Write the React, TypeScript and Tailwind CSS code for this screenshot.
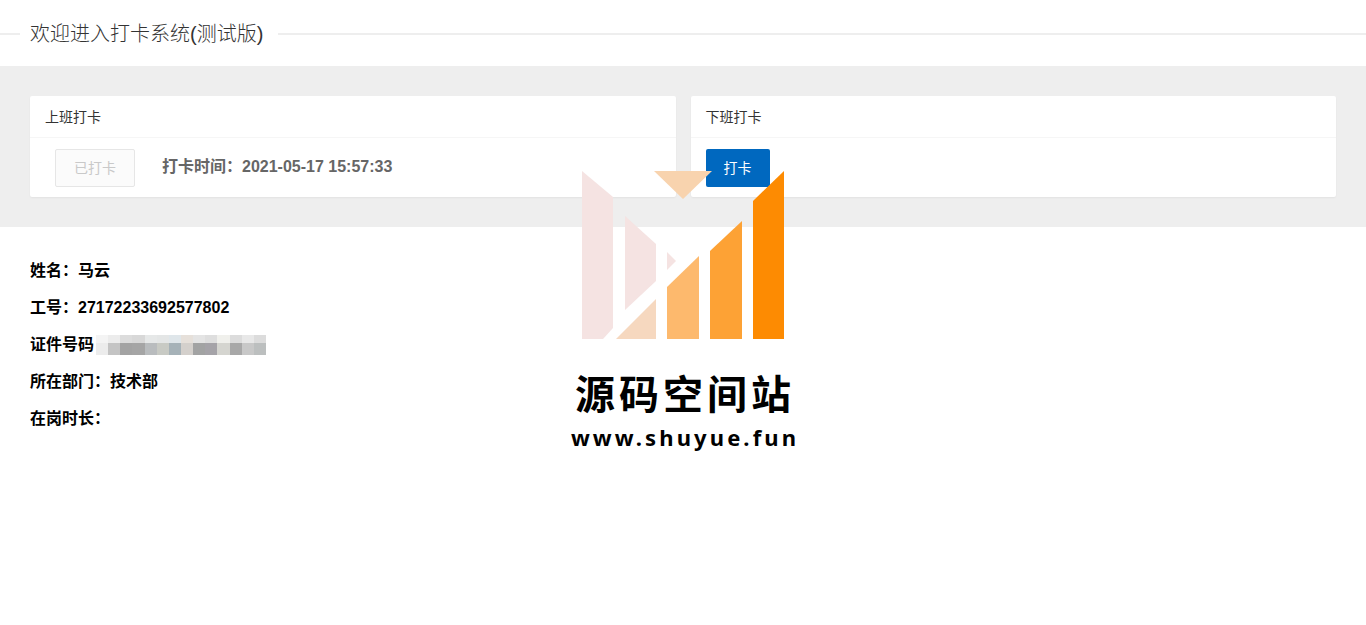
const sans = "font-['Liberation_Sans','Noto_Sans_CJK_SC',sans-serif]";

// 打码块的色块，上下两排
const mosaicTop = ['#f4f4f4', '#ececec', '#dcdcdc', '#d8d8d8', '#e6e8e8', '#e4e6e6', '#dfe6ea', '#e6e0da', '#e4e4e4', '#dedede', '#f0f0ec', '#dcdcdc', '#e8e8e8', '#dcdcdc'];
const mosaicBottom = ['#ececec', '#c4c4c4', '#a3a3a3', '#a5a5a5', '#b9bcbe', '#c8cac4', '#a6b2b8', '#d4d0cc', '#a2a3a3', '#a5a3a8', '#d5d5d0', '#a8a8a8', '#c8c8c8', '#bcbfbf'];

function Card({ title, children }: { title: string; children: React.ReactNode }) {
  return (
    <div className="flex-1 bg-white rounded-[2px] shadow-[0_1px_2px_0_rgba(0,0,0,0.05)]">
      <div className="h-[42px] px-[15px] flex items-center border-b border-[#f6f6f6] text-sm text-[#333]">{title}</div>
      <div className="h-[59px] px-[15px] pt-[11px]">{children}</div>
    </div>
  );
}

function InfoRow({ children }: { children: React.ReactNode }) {
  return <p className="h-[37px] leading-[37px] text-base font-bold text-black">{children}</p>;
}

function Watermark() {
  return (
    <div className="absolute left-[560px] top-[160px] w-[250px] flex flex-col items-center pointer-events-none">
      <svg width="250" height="190" viewBox="560 160 250 190" className="block">
        <polygon points="582,171 613,197 613,328 603,339 582,339" fill="#f5e3e2" />
        <polygon points="625,216 656,244 656,281 625,310" fill="#f5e3e2" />
        <polygon points="667,252 676,261 667,270" fill="#f5e3e2" />
        <polygon points="654,171 712,171 683,199" fill="#f8d3ae" />
        <polygon points="616,339 656,299 656,339" fill="#f6d8bf" />
        <polygon points="667,287 699,256 699,339 667,339" fill="#fdb96d" />
        <polygon points="710,251 742,221 742,339 710,339" fill="#fda235" />
        <polygon points="753,201 784,171 784,339 753,339" fill="#fd8b02" />
      </svg>
      <div className="mt-[17px] h-[50px] leading-[50px] text-[40px] font-bold tracking-[4px] text-black whitespace-nowrap font-['Noto_Sans_CJK_SC',sans-serif]">源码空间站</div>
      <div className="mt-[6px] h-[28px] leading-[28px] text-[22px] font-bold tracking-[3.1px] text-black whitespace-nowrap font-['Noto_Sans',sans-serif]">www.shuyue.fun</div>
    </div>
  );
}

export default function App() {
  return (
    <div className={`relative min-h-[625px] bg-white overflow-hidden ${sans}`}>
      {/* 标题 */}
      <div className="h-[66px] pt-[10px]">
        <div className="h-[48px] flex w-full items-center">
          <div className="w-5 border-t-2 border-[#eeeeee]" />
          <h1 className="ml-[10px] mr-[15px] text-xl font-light text-[#333] leading-[48px] whitespace-nowrap">欢迎进入打卡系统(测试版)</h1>
          <div className="flex-1 border-t-2 border-[#eeeeee]" />
        </div>
      </div>

      {/* 打卡卡片 */}
      <div className="h-[161px] bg-[#eeeeee] p-[30px] flex gap-[15px]">
        <Card title="上班打卡">
          <div className="flex items-center">
            <button className="ml-[10px] w-20 h-[38px] border border-[#e6e6e6] bg-[#fbfbfb] text-sm text-[#c9c9c9] rounded-[2px]">已打卡</button>
            <span className="ml-[27px] -mt-[2px] text-base font-bold text-[#666]">打卡时间：2021-05-17 15:57:33</span>
          </div>
        </Card>
        <Card title="下班打卡">
          <button className="w-16 h-[38px] bg-[#0068bf] text-sm text-white rounded-[2px]">打卡</button>
        </Card>
      </div>

      {/* 个人信息 */}
      <div className="pt-[25px] pl-[30px]">
        <InfoRow>姓名：马云</InfoRow>
        <InfoRow>工号：27172233692577802</InfoRow>
        <div className="flex items-center h-[37px]">
          <span className="text-base font-bold text-black">证件号码</span>
          <div className="relative ml-[2px] w-[170px] blur-[0.7px]">
            <div className="flex h-2">
              {mosaicTop.map((c, i) => (
                <div key={i} className="flex-1" style={{ backgroundColor: c }} />
              ))}
            </div>
            <div className="flex h-3">
              {mosaicBottom.map((c, i) => (
                <div key={i} className="flex-1" style={{ backgroundColor: c }} />
              ))}
            </div>
          </div>
        </div>
        <InfoRow>所在部门：技术部</InfoRow>
        <InfoRow>在岗时长：</InfoRow>
      </div>

      <Watermark />
    </div>
  );
}
